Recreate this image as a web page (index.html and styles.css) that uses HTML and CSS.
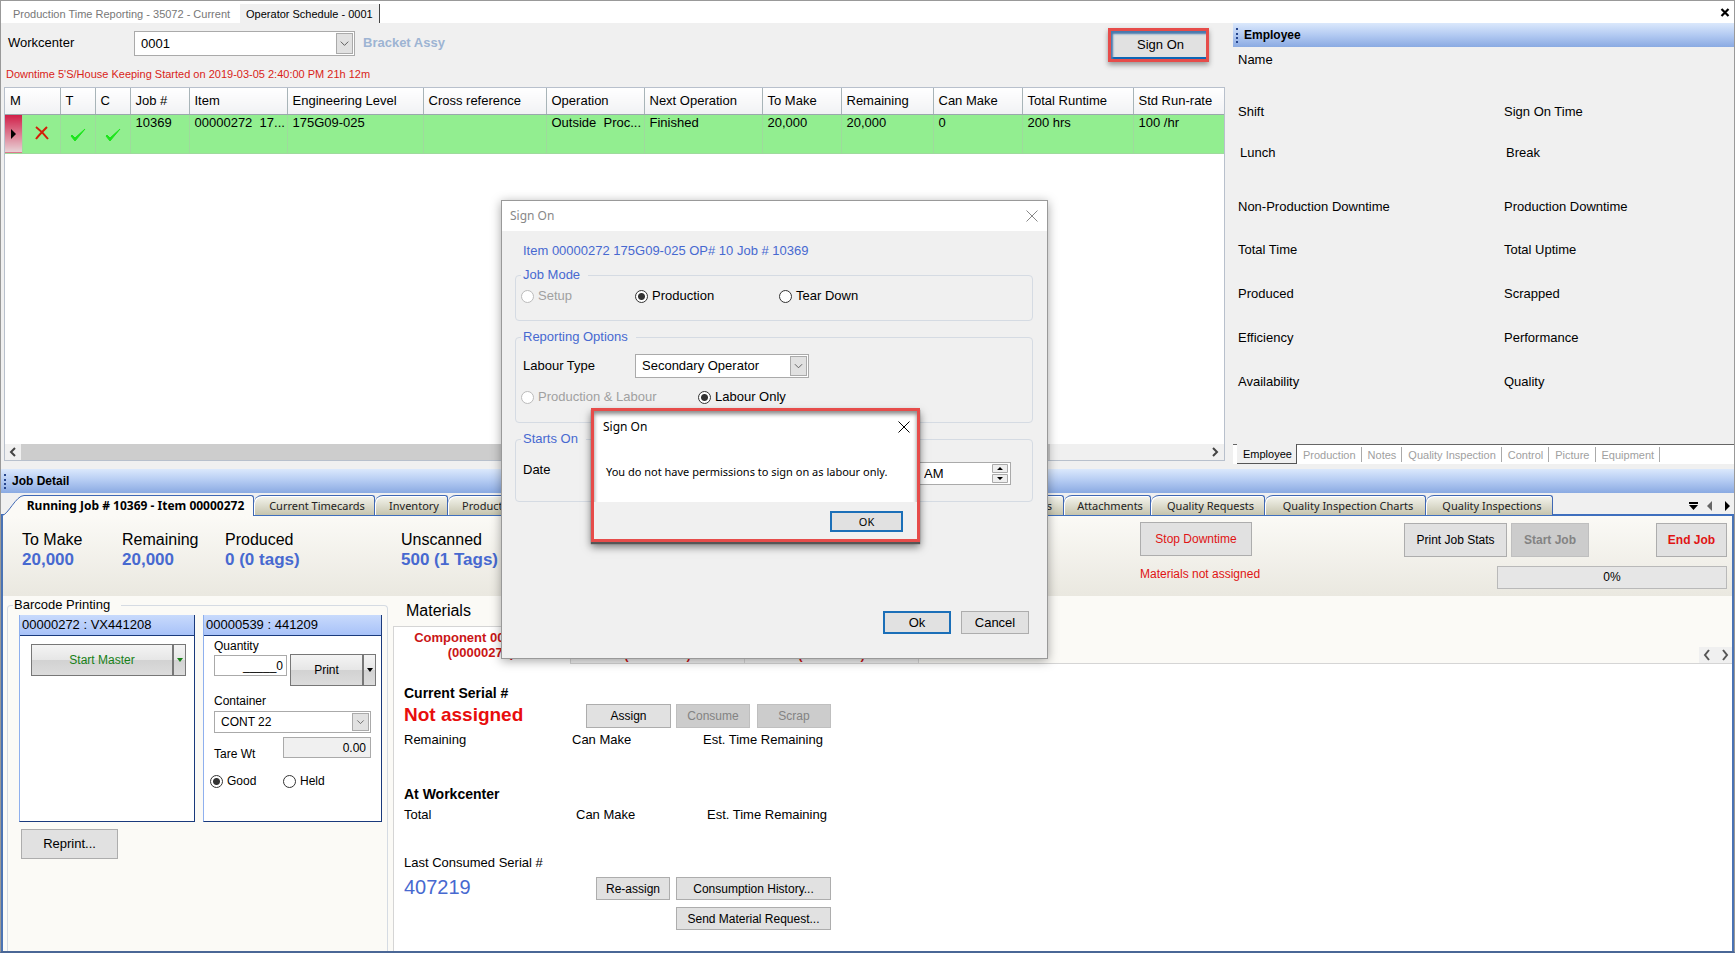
FILE: index.html
```html
<!DOCTYPE html>
<html lang="en">
<head>
<meta charset="utf-8">
<title>Operator Schedule - 0001</title>
<link rel="stylesheet" href="styles.css">
</head>
<body>
<div class="app">
  <nav class="doc-tabs">
    <button class="doc-tab">Production Time Reporting - 35072 - Current</button>
    <button class="doc-tab active">Operator Schedule - 0001</button>
    <button class="doc-close" aria-label="Close"><svg width="10" height="9" viewBox="0 0 10 9"><path d="M1.5 1l7 7M8.500 1l-7 7" stroke="#000" stroke-width="2.200"/></svg></button>
  </nav>

  <div class="upper">
    <section class="schedule">
      <div class="toolbar">
        <label class="wc-label" for="wc">Workcenter</label>
        <span class="combo wc-combo"><select id="wc"><option>0001</option></select><svg class="arrow" viewBox="0 0 16 20"><path d="M4 8l4 4 4-4" fill="none" stroke="#555"/></svg></span>
        <strong class="wc-name">Bracket Assy</strong>
        <button class="btn sign-on">Sign On</button>
      </div>
      <p class="downtime">Downtime 5'S/House Keeping Started on 2019-03-05 2:40:00 PM 21h 12m</p>
      <div class="grid-box">
        <table class="jobs">
          <colgroup><col class="c-mark"><col class="c-m"><col class="c-t"><col class="c-c"><col class="c-job"><col class="c-item"><col class="c-eng"><col class="c-cross"><col class="c-op"><col class="c-next"><col class="c-make"><col class="c-rem"><col class="c-can"><col class="c-run"><col></colgroup>
          <thead><tr><th colspan="2">M</th><th>T</th><th>C</th><th>Job #</th><th>Item</th><th>Engineering Level</th><th>Cross reference</th><th>Operation</th><th>Next Operation</th><th>To Make</th><th>Remaining</th><th>Can Make</th><th>Total Runtime</th><th>Std Run-rate</th></tr></thead>
          <tbody><tr>
            <td class="marker"><svg width="6" height="10" viewBox="0 0 6 10"><path d="M0 0l5 5-5 5z" fill="#000"/></svg></td>
            <td class="icon"><svg width="16" height="16" viewBox="0 0 16 16"><path d="M2 2c4 3 8 7 12 12M13 2C9 6 5 10 2 14" fill="none" stroke="#d31d08" stroke-width="2"/></svg></td>
            <td class="icon low"><svg width="16" height="14" viewBox="0 0 16 14"><path d="M1 8l4 5L15 1 5 10 2 7z" fill="#1be51b" stroke="#1be51b"/></svg></td>
            <td class="icon low"><svg width="16" height="14" viewBox="0 0 16 14"><path d="M1 8l4 5L15 1 5 10 2 7z" fill="#1be51b" stroke="#1be51b"/></svg></td>
            <td>10369</td><td>00000272&nbsp; 17...</td><td>175G09-025</td><td></td><td>Outside&nbsp; Proc...</td><td>Finished</td><td>20,000</td><td>20,000</td><td>0</td><td>200 hrs</td><td>100 /hr</td>
          </tr></tbody>
        </table>
        <div class="hscroll">
          <svg width="16" height="16" viewBox="0 0 16 16"><path d="M10 4L6 8l4 4" fill="none" stroke="#444" stroke-width="2"/></svg>
          <span class="thumb"></span>
          <svg width="16" height="16" viewBox="0 0 16 16"><path d="M5 4l4 4-4 4" fill="none" stroke="#444" stroke-width="2"/></svg>
        </div>
      </div>
    </section>

    <aside class="employee">
      <h2 class="bar"><i class="grip"></i>Employee</h2>
      <div class="facts">
        <span class="wide">Name</span>
        <span>Shift</span><span>Sign On Time</span>
        <span class="in">Lunch</span><span class="in">Break</span>
        <span>Non-Production Downtime</span><span>Production Downtime</span>
        <span>Total Time</span><span>Total Uptime</span>
        <span>Produced</span><span>Scrapped</span>
        <span>Efficiency</span><span>Performance</span>
        <span>Availability</span><span>Quality</span>
      </div>
      <nav class="emp-tabs"><button class="active">Employee</button><button>Production</button><button>Notes</button><button>Quality Inspection</button><button>Control</button><button>Picture</button><button>Equipment</button></nav>
    </aside>
  </div>

  <section class="detail">
    <h2 class="bar"><i class="grip"></i>Job Detail</h2>
    <nav class="job-tabs">
      <button class="job-tab active"><svg width="22" height="21" viewBox="0 0 22 21"><path d="M0 20.500C6 20 14 .5 22 .5V21H0z" fill="#fbfaf6"/><path d="M0 20.500C6 20 14 .5 22 .5" fill="none" stroke="#3f68b4"/></svg><span>Running Job # 10369 - Item 00000272</span></button>
      <button class="job-tab t-time">Current Timecards</button>
      <button class="job-tab t-inv">Inventory</button>
      <button class="job-tab t-prod">Production</button>
      <button class="job-tab t-doc">Documents</button>
      <button class="job-tab t-att">Attachments</button>
      <button class="job-tab t-req">Quality Requests</button>
      <button class="job-tab t-chart">Quality Inspection Charts</button>
      <button class="job-tab t-insp">Quality Inspections</button>
      <svg class="tab-nav" width="42" height="12" viewBox="0 0 42 12"><path d="M0 2h9v2H0zM0 5h9L4.500 10zM36 1v10l5-5z" fill="#000"/><path d="M23 1v10l-5-5z" fill="#666"/></svg>
    </nav>

    <div class="summary">
      <div class="stat"><span>To Make</span><b>20,000</b></div>
      <div class="stat"><span>Remaining</span><b>20,000</b></div>
      <div class="stat"><span>Produced</span><b>0 (0 tags)</b></div>
      <div class="stat"><span>Unscanned</span><b>500 (1 Tags)</b></div>
      <div class="alert"><button class="btn stop">Stop Downtime</button><span>Materials not assigned</span></div>
      <div class="actions">
        <div class="action-row"><button class="btn stats">Print Job Stats</button><button class="btn start" disabled>Start Job</button><button class="btn end-job">End Job</button></div>
        <div class="progress" role="progressbar" aria-valuenow="0">0%</div>
      </div>
    </div>

    <div class="lower">
      <fieldset class="barcode">
        <legend>Barcode Printing</legend>
        <div class="cards">
          <section class="card first">
            <h3>00000272 : VX441208</h3>
            <div class="split master"><button class="main">Start Master</button><button class="drop" aria-label="More"><svg width="6" height="4" viewBox="0 0 6 4"><path d="M0 0h6L3 4z" fill="#178017"/></svg></button></div>
          </section>
          <section class="card second">
            <h3>00000539 : 441209</h3>
            <div class="card-body">
              <label for="qty">Quantity</label>
              <div class="qty-row"><input id="qty" value="_____0"><div class="split"><button class="main">Print</button><button class="drop" aria-label="More"><svg width="6" height="4" viewBox="0 0 6 4"><path d="M0 0h6L3 4z" fill="#000"/></svg></button></div></div>
              <label for="cont">Container</label>
              <span class="combo cont"><select id="cont"><option>CONT 22</option></select><svg class="arrow" viewBox="0 0 16 20"><path d="M4 8l4 4 4-4" fill="none" stroke="#555"/></svg></span>
              <div class="tare"><label for="tare">Tare Wt</label><input id="tare" value="0.00" readonly></div>
              <div class="quality"><label><input type="radio" name="q" checked>Good</label><label><input type="radio" name="q">Held</label></div>
            </div>
          </section>
        </div>
        <button class="btn reprint">Reprint...</button>
      </fieldset>

      <section class="materials">
        <h3>Materials</h3>
        <div class="mat-tabs"><button class="active">Component 00000272<br>(00000272)</button><button>Component 00000272<br>(00000272)</button><button>Component 00000539<br>(00000539)</button>
          <svg class="mat-nav" width="33" height="16" viewBox="0 0 33 16"><path d="M10 3L6 8l4 5M24 3l4 5-4 5" fill="none" stroke="#555" stroke-width="2"/></svg>
        </div>
        <div class="mat-body">
          <h4>Current Serial #</h4>
          <div class="serial-row"><strong class="unassigned">Not assigned</strong><div class="buttons"><button class="btn assign">Assign</button><button class="btn small" disabled>Consume</button><button class="btn small gap" disabled>Scrap</button></div></div>
          <div class="cols"><span>Remaining</span><span>Can Make</span><span>Est. Time Remaining</span></div>
          <h4 class="at">At Workcenter</h4>
          <div class="cols two"><span>Total</span><span>Can Make</span><span>Est. Time Remaining</span></div>
          <p class="last">Last Consumed Serial #</p>
          <div class="serial-row"><span class="serial">407219</span><div class="hist"><button class="btn">Re-assign</button><button class="btn">Consumption History...</button><button class="btn send">Send Material Request...</button></div></div>
        </div>
      </section>
    </div>
  </section>

  <form class="dialog" role="dialog" aria-label="Sign On">
    <header><span>Sign On</span><button type="button" aria-label="Close"><svg width="12" height="12" viewBox="0 0 12 12"><path d="M.5.500l11 11M11.500.5l-11 11" stroke="#888" fill="none"/></svg></button></header>
    <div class="dialog-body">
      <p class="item">Item 00000272 175G09-025 OP# 10 Job # 10369</p>
      <fieldset class="mode"><legend>Job Mode</legend>
        <label class="off"><input type="radio" name="m" disabled>Setup</label><label><input type="radio" name="m" checked>Production</label><label><input type="radio" name="m">Tear Down</label>
      </fieldset>
      <fieldset class="report"><legend>Reporting Options</legend>
        <div class="labour"><label for="lt">Labour Type</label><span class="combo"><select id="lt"><option>Secondary Operator</option></select><svg class="arrow" viewBox="0 0 16 20"><path d="M4 8l4 4 4-4" fill="none" stroke="#555"/></svg></span></div>
        <div class="kinds"><label class="off"><input type="radio" name="k" disabled>Production &amp; Labour</label><label><input type="radio" name="k" checked>Labour Only</label></div>
      </fieldset>
      <fieldset class="starts"><legend>Starts On</legend>
        <div class="when"><label for="time">Date</label><span class="spin"><input id="time" value="AM"><svg width="16" height="19" viewBox="0 0 16 19"><path d="M.5.500h15v8H.5zM.5 10.500h15v8H.5z" fill="#eee" stroke="#aaa"/><path d="M5 6h6L8 3zM5 13h6l-3 3z" fill="#000"/></svg></span></div>
      </fieldset>
      <div class="dialog-actions"><button type="button" class="btn primary">Ok</button><button type="button" class="btn">Cancel</button></div>
    </div>
  </form>

  <div class="message" role="alertdialog" aria-label="Sign On">
    <header><span>Sign On</span><button aria-label="Close"><svg width="12" height="12" viewBox="0 0 12 12"><path d="M.5.500l11 11M11.500.5l-11 11" stroke="#000" fill="none"/></svg></button></header>
    <p>You do not have permissions to sign on as labour only.</p>
    <footer><button class="btn primary">OK</button></footer>
  </div>
</div>
</body>
</html>
```
FILE: styles.css
```css
* { box-sizing: border-box; }
body { margin: 0; font: 13px/16px "Liberation Sans", Arial, sans-serif; color: #000; background: #f0f0f0; }
button, input, select { font: inherit; color: inherit; margin: 0; padding: 0; border-radius: 0; }
h2, h3, h4, p, fieldset { margin: 0; padding: 0; }
button { border: 0; background: none; white-space: nowrap; }
svg { flex: none; display: block; }

.app { position: relative; min-height: 100vh; display: flex; flex-direction: column; border: 1px solid #999; border-bottom: 2px solid #4a6796; }
.btn { background: #e1e1e1; border: 1px solid #adadad; font-size: 12px; }
.btn:disabled { background: #ccc; border-color: #bfbfbf; color: #838383; }
.btn.primary { border: 2px solid #1b6fb8; }

.doc-tabs { display: flex; height: 22px; padding-top: 3px; background: #fff; }
.doc-tab { padding: 0 10px 0 12px; font-size: 11px; color: #777; }
.doc-tab.active { padding: 0 6px; background: #f0f0f0; color: #000; border-right: 1px solid #444; }
.doc-close { margin-left: auto; padding: 0 4px 3px; }

.upper { display: flex; height: 446px; }
.schedule { flex: 1; min-width: 0; display: flex; flex-direction: column; padding: 5px 8px 8px 3px; }
.toolbar { display: flex; height: 34px; align-items: flex-start; padding-top: 3px; }
.wc-label { width: 130px; padding: 4px; }
.combo { position: relative; display: inline-flex; border: 1px solid #aaa; background: #fff; }
.combo select { appearance: none; flex: 1; width: 100%; border: 0; background: #fff; padding-left: 6px; }
.combo .arrow { position: absolute; right: 1px; top: 1px; bottom: 1px; width: 17px; height: calc(100% - 2px); background: #e1e1e1; border: 1px solid #aaa; pointer-events: none; }
.wc-combo { width: 221px; height: 25px; }
.wc-name { margin-left: 8px; padding-top: 4px; color: #9db4d3; }
.sign-on { margin-left: auto; margin-right: 16px; width: 101px; height: 34px; margin-top: -3px; padding-left: 4px; font-size: 13px; border: 3px solid #e64c4a; box-shadow: 0 3px 5px #999, inset 2px 3px 2px #4779ae, inset 0 -2px 0 #0e66b5; }
.downtime { height: 25px; padding: 4px 2px; font-size: 11px; color: #d91e18; }
.grid-box { flex: 1; display: flex; flex-direction: column; border: 1px solid #b8c0cc; background: #fff; }
.jobs { width: 100%; table-layout: fixed; border-collapse: collapse; }
.jobs th { height: 26px; padding: 0 5px; text-align: left; font-weight: 400; white-space: nowrap; overflow: hidden; background: linear-gradient(#fff, #f1f2f4); border-right: 1px solid #a8b4b8; border-bottom: 1px solid #9aa8ac; }
.jobs td { height: 39px; padding: 0 5px; vertical-align: top; white-space: nowrap; overflow: hidden; background: #92ee90; border-right: 1px solid #9edb9c; border-bottom: 1px solid #9edb9c; }
.jobs th:last-child, .jobs td:last-child { border-right: 0; }
.jobs td.marker { background: linear-gradient(#d01c46, #e8d4d8); padding: 14px 6px 0; }
.jobs td.icon { padding: 10px 0 0 11px; }
.jobs td.low { padding-top: 13px; padding-left: 9px; }
.c-mark { width: 17px; } .c-m { width: 38px; } .c-t { width: 35px; } .c-c { width: 35px; }
.c-job { width: 59px; } .c-item { width: 98px; } .c-eng { width: 136px; } .c-cross { width: 123px; }
.c-op { width: 98px; } .c-next { width: 118px; } .c-make { width: 79px; } .c-rem { width: 92px; }
.c-can { width: 89px; } .c-run { width: 111px; }
.hscroll { margin-top: auto; display: flex; height: 16px; background: #f0f0f0; justify-content: space-between; }
.thumb { width: 1029px; margin-right: auto; background: #cdcdcd; }

.bar { display: flex; align-items: center; height: 24px; padding-left: 3px; font-size: 12px; background: linear-gradient(#dbe8fc, #b3caf2 50%, #8aaae2); }
.grip { width: 3px; height: 15px; margin-right: 5px; border-left: 2px dotted #26458c; }
.employee { width: 501px; display: flex; flex-direction: column; }
.employee .bar { flex: none; }
.facts { flex: 1; display: grid; grid-template-columns: 266px 1fr; grid-template-rows: 52px 41px 54px 43px 44px 44px 44px 16px; padding: 5px 5px 0; align-content: start; }
.facts .wide { grid-column: 1 / 3; }
.facts .in { padding-left: 2px; }
.emp-tabs { display: flex; height: 20px; margin-bottom: 5px; padding-left: 4px; background: #fff; border-top: 1px solid #666; }
.emp-tabs button { padding: 0 5px 0 6px; font-size: 11px; color: #a0a0a0; border-right: 1px solid #aaa; margin: 2px 0; }
.emp-tabs .active { width: 60px; margin: -1px 0 0; color: #000; background: #f0f0f0; border-right: 1px solid #555; border-bottom: 1px solid #555; }

.detail { flex: 1; display: flex; flex-direction: column; }
.job-tabs { display: flex; height: 23px; padding: 2px 3px 0 1px; border-bottom: 2px solid #3f6fbe; font: 11px/18px "Noto Sans", sans-serif; }
.job-tab { height: 20px; border: solid #3f68b4; border-width: 1px 1px 0 0; border-radius: 8px 3px 0 0; background: linear-gradient(#f5f5ee, #c5c4ae); color: #222; text-align: center; padding-left: 6px; }
.job-tab + .job-tab { box-shadow: inset 1px 1px 0 #fff; }
.job-tab.active { display: flex; width: 252px; height: 22px; padding: 0; border: 0; background: none; color: #000; font-weight: 700; font-size: 12px; }
.job-tab.active span { flex: 1; height: 22px; padding-right: 6px; background: #fbfaf6; border-top: 1px solid #3f68b4; border-right: 1px solid #3f68b4; border-radius: 0 3px 0 0; line-height: 20px; }
.t-time { width: 121px; } .t-inv { width: 73px; } .t-prod { width: 320px; padding-left: 14px; text-align: left; }
.t-doc { width: 296px; padding-right: 11px; text-align: right; } .t-att { width: 87px; } .t-req { width: 114px; } .t-chart { width: 161px; } .t-insp { width: 127px; }
.tab-nav { margin: 5px 0 0 auto; }
.summary { display: grid; grid-template-columns: 100px 103px 176px 739px 264px 1fr; height: 80px; padding: 6px 5px 0 19px; background: linear-gradient(#fbfaf6, #eae8e0); border-left: 2px solid #4a73b4; border-right: 2px solid #4a73b4; }
.stat { display: flex; flex-direction: column; padding-top: 8px; font-size: 16px; line-height: 20px; }
.stat b { font-size: 17px; color: #4769d0; }
.alert { display: flex; flex-direction: column; align-items: flex-start; gap: 10px; color: #e01414; font-size: 12px; }
.stop { width: 112px; height: 34px; }
.actions { display: flex; flex-direction: column; align-items: flex-end; padding-top: 1px; gap: 9px; }
.action-row { display: flex; gap: 4px; width: 100%; }
.action-row .btn { height: 34px; }
.stats { width: 103px; }
.start { width: 78px; font-weight: 700; }
.end-job { width: 71px; margin-left: auto; font-weight: 700; color: #e01414; }
.progress { width: 230px; height: 23px; background: #e6e6e6; border: 1px solid #b9b9b9; text-align: center; font-size: 12px; line-height: 21px; }

.lower { flex: 1; display: flex; background: #fbfaf6; border-left: 2px solid #4a73b4; border-right: 2px solid #4a73b4; padding-left: 4px; }
fieldset { min-width: 0; border: 1px solid #d5dbe3; border-radius: 4px; }
.barcode { width: 381px; padding: 2px 5px 0 11px; border-bottom: 0; border-radius: 4px 4px 0 0; margin-top: 1px; }
.barcode legend { padding: 0 11px 0 1px; margin-left: -6px; }
.cards { display: flex; gap: 8px; }
.card { height: 207px; background: #fff; border: solid #1a3a7c; border-width: 0 1px 1px 0; border-left: 1px solid #8fb0ee; }
.card.first { width: 176px; }
.card.second { flex: 1; }
.card h3 { height: 21px; padding: 2px; font-weight: 400; font-size: 13px; background: linear-gradient(#c8dafc, #a8c2f8); border-bottom: 1px solid #1a3a7c; }
.split { display: flex; height: 32px; font-size: 12px; }
.split button { border: 1px solid #777; background: linear-gradient(#f4f4f4, #e6e6e6 50%, #d2d2d2 51%, #dcdcdc); }
.split .main { flex: 1; }
.split .drop { width: 13px; display: flex; align-items: center; justify-content: center; }
.master { margin: 8px 8px 0 11px; color: #178017; }
.card-body { display: flex; flex-direction: column; padding: 2px 5px 0 10px; font-size: 12px; }
.qty-row { display: flex; gap: 3px; }
.qty-row input { width: 73px; height: 21px; margin-top: 1px; text-align: right; padding-right: 3px; border: 1px solid #aaa; }
.qty-row .split { flex: 1; }
.qty-row + label { margin-top: 7px; }
.cont { width: 157px; height: 22px; margin-top: 2px; }
.tare { display: flex; width: 157px; justify-content: space-between; align-items: flex-start; margin-top: 4px; }
.tare label { padding-top: 9px; }
.tare input { width: 88px; height: 21px; text-align: right; padding-right: 4px; border: 1px solid #aaa; background: #f0f0f0; }
.quality { display: grid; grid-template-columns: 73px 1fr; margin: 11px 0 0 -4px; }
label:has(input[type=radio]) { display: flex; align-items: center; gap: 4px; }
input[type=radio] { appearance: none; width: 13px; height: 13px; border: 1px solid #333; border-radius: 50%; background: #fff; }
input[type=radio]:checked { background: radial-gradient(circle, #333 0 3px, #fff 4px); }
input[type=radio]:disabled { border-color: #bbb; }
.off { color: #a0a0a0; }
.reprint { width: 97px; height: 30px; margin: 7px 0 0 2px; font-size: 13px; }

.materials { flex: 1; min-width: 0; margin-left: 5px; display: flex; flex-direction: column; padding-top: 5px; }
.materials h3 { padding-left: 13px; font-size: 16px; line-height: 20px; font-weight: 400; }
.mat-tabs { display: flex; height: 38px; margin-top: 5px; border-left: 1px solid #d5d5d5; border-bottom: 1px solid #d5d5d5; }
.mat-tabs button { width: 174px; height: 38px; padding-top: 3px; background: #f2f2f2; border: solid #d5d5d5; border-width: 1px 1px 1px 0; color: #ca1616; font-weight: 700; line-height: 15px; }
.mat-tabs button.active { width: 177px; padding: 0 2px 2px 0; background: #fff; border-bottom: 0; }
.mat-nav { margin: auto 0 0 auto; background: #f0f0f0; }
.mat-body { flex: 1; padding: 20px 0 20px 10px; background: #fff; border-left: 1px solid #d5d5d5; }
.mat-body h4 { font-size: 14px; line-height: 18px; }
.serial-row { display: flex; width: 427px; justify-content: space-between; }
.unassigned { font-size: 19px; line-height: 24px; padding-top: 1px; color: #e80d0d; }
.buttons { display: flex; height: 24px; margin-top: 2px; gap: 5px; }
.assign { width: 85px; }
.small { width: 74px; }
.gap { margin-left: 2px; }
.cols { display: grid; grid-template-columns: 168px 131px 1fr; margin-top: 4px; }
.mat-body .at { margin-top: 37px; }
.cols.two { margin-top: 4px; grid-template-columns: 172px 131px 1fr; }
.last { margin-top: 32px; }
.serial { font-size: 20px; line-height: 24px; color: #4769d0; padding-top: 4px; }
.hist { display: grid; grid-template-columns: 74px 155px; grid-auto-rows: 23px; gap: 7px 6px; margin-top: 6px; }
.send { grid-column: 2; }

.dialog { position: absolute; left: 500px; top: 199px; width: 547px; background: #f0f0f0; border: 1px solid #999; box-shadow: 0 2px 10px rgba(0,0,0,.35); }
.dialog header { display: flex; align-items: center; justify-content: space-between; height: 30px; padding: 0 9px 0 8px; background: #fff; color: #888; font: 12px/16px "Noto Sans", sans-serif; }
.dialog-body { padding: 12px 14px 24px 13px; }
.item { padding-left: 8px; color: #4769d0; }
.dialog fieldset { margin-top: 8px; padding: 5px; }
.dialog legend { padding: 0 8px 0 2px; color: #4769d0; }
.mode { display: grid; grid-template-columns: 114px 144px 1fr; }
.dialog .mode { padding-bottom: 16px; }
.dialog .report { padding: 9px 5px 17px; }
.labour { display: flex; align-items: center; }
.labour label { width: 114px; padding-left: 2px; }
.labour .combo { width: 174px; height: 24px; }
.kinds { display: grid; grid-template-columns: 177px 1fr; margin-top: 11px; }
.dialog .starts { padding: 15px 21px 16px 5px; }
.when { display: flex; justify-content: space-between; padding-left: 2px; }
.spin { display: flex; width: 112px; height: 23px; padding: 1px 2px; background: #fff; border: 1px solid #aaa; }
.spin input { flex: 1; min-width: 0; border: 0; padding-left: 22px; }
.dialog-actions { display: flex; justify-content: flex-end; gap: 10px; margin-top: 109px; padding-right: 4px; }
.dialog-actions .btn { width: 68px; height: 23px; font-size: 13px; }

.message { position: absolute; left: 590px; top: 407px; width: 329px; background: #fff; border: 3px solid #e64c4a; box-shadow: 0 2px 1px #555, 0 5px 8px rgba(0,0,0,.5), inset 0 3px 4px #888; font: 12px/16px "Noto Sans", sans-serif; }
.message header { display: flex; align-items: center; justify-content: space-between; height: 31px; padding: 0 7px 0 9px; }
.message p { padding: 22px 12px; font-size: 11px; }
.message footer { display: flex; justify-content: flex-end; height: 37px; padding: 9px 14px 0; background: #f0f0f0; }
.message .btn { width: 73px; height: 21px; font-size: 11px; line-height: 15px; }
```
